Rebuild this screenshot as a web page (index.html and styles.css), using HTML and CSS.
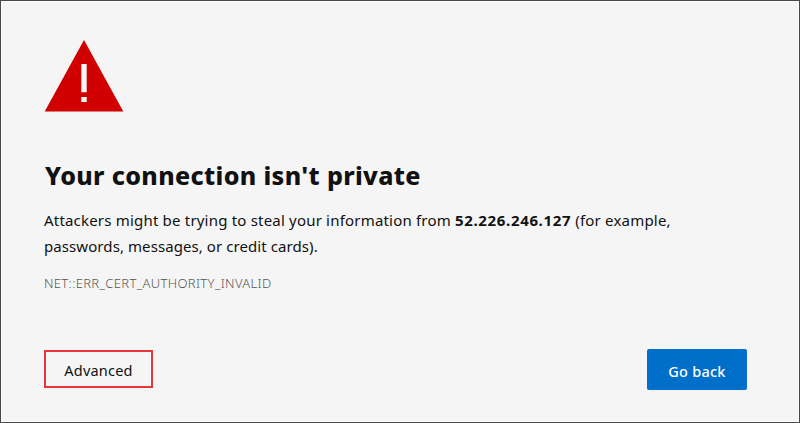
FILE: index.html
```html
<!DOCTYPE html>
<html lang="en">
<head>
<meta charset="utf-8">
<title>Privacy error</title>
<link rel="stylesheet" href="styles.css">
</head>
<body>
<main class="page">
<svg class="warning" width="80" height="72" viewBox="0 0 80 72" aria-hidden="true">
<path class="triangle" d="M40 0 79.300 71.500H.7Z"/>
<path class="mark" d="M37.300 24h5.400v28.300h-5.400zM37.300 57h5.400v5h-5.400z"/>
</svg>
<h1 class="title">Your connection isn't private</h1>
<p class="message"><span class="line">Attackers might be trying to steal your information from <b class="address">52.226.246.127</b> (for example,</span><span class="line second">passwords, messages, or credit cards).</span></p>
<p class="code">NET::ERR_CERT_AUTHORITY_INVALID</p>
<div class="actions">
<button class="button advanced">Advanced</button>
<button class="button back">Go back</button>
</div>
</main>
</body>
</html>
```
FILE: styles.css
```css
* { box-sizing: border-box; }
body { margin: 0; }
.page {
  height: 423px;
  padding: 39px 52px 0 43px;
  border: 1px solid #4a4649;
  box-shadow: inset 0 0 0 1px #fff;
  background: #f5f5f5;
  color: #111;
  font-family: "Noto Sans", sans-serif;
}
.warning { display: block; }
.triangle { fill: #d00000; }
.mark { fill: #f7f7f7; }
.title {
  margin: 46px 0 0 1px;
  font-size: 25px;
  font-weight: 800;
  line-height: 34px;
  letter-spacing: 0.350px;
  white-space: nowrap;
}
.message {
  margin: 15px 0 0;
  font-size: 15px;
  line-height: 26px;
  letter-spacing: 0.195px;
  white-space: nowrap;
}
.line { display: block; }
.second { letter-spacing: 0.080px; }
.address { letter-spacing: 0.650px; }
.code {
  margin: 14px 0 0;
  color: #555;
  font-size: 13px;
  font-weight: 300;
  line-height: 20px;
  letter-spacing: 0.350px;
}
.actions {
  display: flex;
  justify-content: space-between;
  align-items: flex-start;
  margin-top: 56px;
}
.button {
  padding: 0;
  font-family: inherit;
  font-size: 14.500px;
}
.advanced {
  width: 109px;
  height: 38px;
  margin-top: 1px;
  padding-top: 2px;
  border: 2px solid #e8373a;
  background: #f5f5f5;
  color: #111;
  letter-spacing: 0.200px;
}
.back {
  width: 100px;
  height: 41px;
  padding-top: 2px;
  border: 0;
  border-radius: 2px;
  background: #006fc9;
  color: #fff;
  font-weight: 500;
  letter-spacing: 0.250px;
}
```
